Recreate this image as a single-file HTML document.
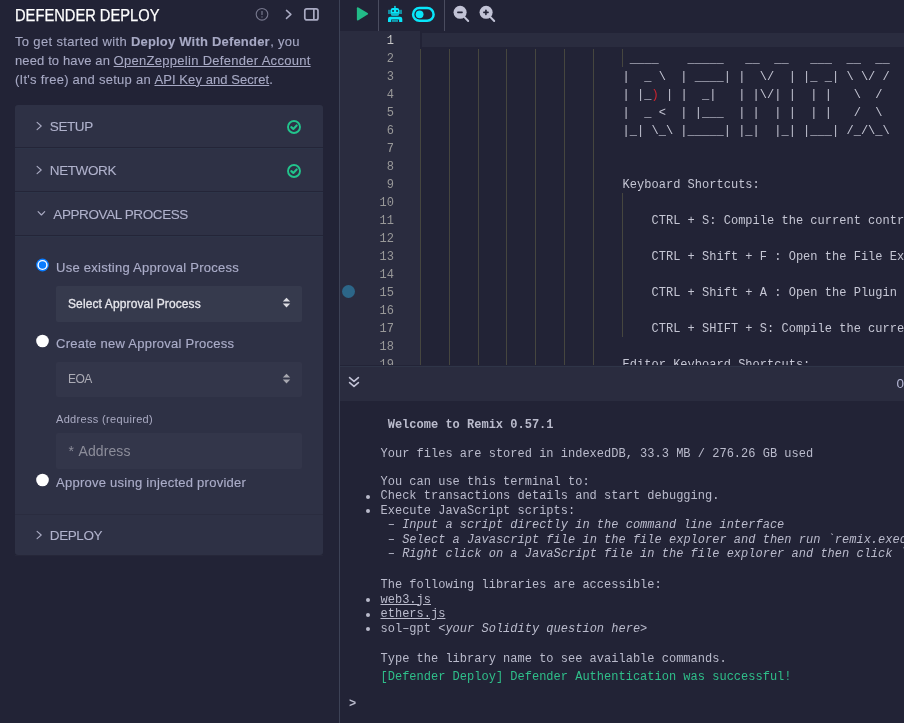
<!DOCTYPE html>
<html><head><meta charset="utf-8">
<style>
*{box-sizing:border-box;margin:0;padding:0}
html,body{width:904px;height:723px;overflow:hidden;background:#222336}
body{position:relative;font-family:"Liberation Sans",sans-serif}
.a{position:absolute;white-space:pre;line-height:1}
.s{font-family:"Liberation Sans",sans-serif}
.m{font-family:"Liberation Mono",monospace}
#left{position:absolute;left:0;top:0;width:339px;height:723px;background:#222336}
#lborder{position:absolute;left:339px;top:0;width:1px;height:723px;background:#3d4256}
.card{position:absolute;left:15px;width:308px;background:#2e3145}
.hdr{color:#b0b2cc;font-size:13.5px;letter-spacing:-0.4px;-webkit-text-stroke:0.1px #b0b2cc}
.desc{color:#a7a9c4;font-size:13px;letter-spacing:0.24px;-webkit-text-stroke:0.1px #a7a9c4}
.desc u{text-decoration:underline;text-underline-offset:1px}
.lbl{color:#abadc9;font-size:13px;letter-spacing:0.26px;-webkit-text-stroke:0.15px #abadc9}
.sel{position:absolute;left:56px;width:246px;background:#363a4d;border-radius:2px}
#editor{position:absolute;left:340px;top:0;width:564px;height:365px;background:#222336;overflow:hidden}
.ln{position:absolute;left:0;width:54px;text-align:right;font-size:12px;color:#9a9aa2;font-family:"Liberation Mono",monospace;line-height:1}
.code{position:absolute;font-family:"Liberation Mono",monospace;font-size:12px;color:#c5c6d4;white-space:pre;line-height:1;letter-spacing:0.02px}
.guide{position:absolute;width:1px;background:#46463f}
#term{position:absolute;left:340px;top:365px;width:564px;height:358px;background:#222336;overflow:hidden}
.t{position:absolute;font-family:"Liberation Mono",monospace;font-size:12px;color:#babbcc;white-space:pre;line-height:1;letter-spacing:0.01px}
.t i{font-style:italic}
.bul{position:absolute;width:4px;height:4px;border-radius:50%;background:#babbcc}
</style></head>
<body><div id="root" style="position:absolute;left:0;top:0;width:904px;height:723px;overflow:hidden;will-change:transform">
<div id="left">
  <div class="a s" style="left:15px;top:8.2px;font-size:16px;color:#fff;transform:scaleX(0.918);transform-origin:0 0;-webkit-text-stroke:0.25px #fff">DEFENDER DEPLOY</div>
  <!-- header icons -->
  <svg style="position:absolute;left:254px;top:6px" width="16" height="16" viewBox="0 0 16 16">
    <circle cx="8" cy="8.3" r="5.8" fill="none" stroke="#77788e" stroke-width="1.1"/>
    <rect x="7.4" y="5" width="1.2" height="4" rx="0.5" fill="#77788e"/>
    <circle cx="8" cy="10.9" r="0.7" fill="#77788e"/>
  </svg>
  <svg style="position:absolute;left:282px;top:6px" width="14" height="16" viewBox="0 0 14 16">
    <path d="M4.5 4.4 L8.9 8.4 L4.5 12.4" fill="none" stroke="#a9aac2" stroke-width="1.5" stroke-linecap="round" stroke-linejoin="round"/>
  </svg>
  <svg style="position:absolute;left:302px;top:6px" width="18" height="16" viewBox="0 0 18 16">
    <rect x="2.8" y="2.9" width="13.2" height="11" rx="2" fill="none" stroke="#a9aac2" stroke-width="1.7"/>
    <rect x="11" y="2.9" width="1.7" height="11" fill="#a9aac2"/>
  </svg>

  <div class="a desc" style="left:15px;top:35.1px;letter-spacing:0.34px">To get started with </div>
  <div class="a desc" style="left:130.9px;top:35.1px;letter-spacing:0.2px"><b>Deploy With Defender</b></div>
  <div class="a desc" style="left:270.2px;top:35.1px;letter-spacing:0.26px">, you</div>
  <div class="a desc" style="left:15px;top:53.7px;letter-spacing:0.12px">need to have an </div>
  <div class="a desc" style="left:113.6px;top:53.7px;letter-spacing:0.29px"><u>OpenZeppelin Defender Account</u></div>
  <div class="a desc" style="left:15px;top:72.7px;letter-spacing:0.26px">(It's free) and setup an </div>
  <div class="a desc" style="left:154.5px;top:72.7px;letter-spacing:0.07px"><u>API Key and Secret</u>.</div>

  <!-- cards -->
  <div class="card" style="top:105px;height:450px;border-radius:3px"></div>
  <div style="position:absolute;left:15px;top:147px;width:308px;height:1px;background:#242538"></div>
  <div style="position:absolute;left:15px;top:148px;width:308px;height:1px;background:#2d3448"></div>
  <div style="position:absolute;left:15px;top:191px;width:308px;height:1px;background:#242538"></div>
  <div style="position:absolute;left:15px;top:192px;width:308px;height:1px;background:#2d3448"></div>
  <div style="position:absolute;left:15px;top:235px;width:308px;height:1px;background:#242538"></div>
  <div style="position:absolute;left:15px;top:236px;width:308px;height:1px;background:#2d3448"></div>
  <div style="position:absolute;left:15px;top:514px;width:308px;height:1px;background:#2a2c3f"></div>
  <div style="position:absolute;left:15px;top:555px;width:308px;height:1px;background:#262739"></div>

  <!-- chevrons -->
  <svg style="position:absolute;left:33px;top:119px" width="12" height="14" viewBox="0 0 12 14"><path d="M4.1 3.4 L8.2 7 L4.1 10.6" fill="none" stroke="#a9aac2" stroke-width="1.15" stroke-linecap="round" stroke-linejoin="round"/></svg>
  <div class="a hdr" style="left:49.8px;top:119.8px">SETUP</div>
  <svg style="position:absolute;left:33px;top:163px" width="12" height="14" viewBox="0 0 12 14"><path d="M4.1 3.4 L8.2 7 L4.1 10.6" fill="none" stroke="#a9aac2" stroke-width="1.15" stroke-linecap="round" stroke-linejoin="round"/></svg>
  <div class="a hdr" style="left:49.8px;top:163.8px">NETWORK</div>
  <svg style="position:absolute;left:35px;top:207px" width="12" height="14" viewBox="0 0 12 14"><path d="M3.1 4.6 L6.4 8 L9.7 4.6" fill="none" stroke="#a9aac2" stroke-width="1.15" stroke-linecap="round" stroke-linejoin="round"/></svg>
  <div class="a hdr" style="left:53.3px;top:207.8px">APPROVAL PROCESS</div>
  <svg style="position:absolute;left:33px;top:528px" width="12" height="14" viewBox="0 0 12 14"><path d="M4.1 3.4 L8.2 7 L4.1 10.6" fill="none" stroke="#a9aac2" stroke-width="1.15" stroke-linecap="round" stroke-linejoin="round"/></svg>
  <div class="a hdr" style="left:49.8px;top:528.7px">DEPLOY</div>

  <!-- check icons -->
  <svg style="position:absolute;left:286px;top:118.9px" width="16" height="16" viewBox="0 0 16 16">
    <circle cx="8" cy="8" r="6" fill="none" stroke="#22c48c" stroke-width="1.9"/>
    <path d="M5.3 8.1 L7.3 9.9 L10.7 6.4" fill="none" stroke="#22c48c" stroke-width="2.1" stroke-linecap="round" stroke-linejoin="round"/>
  </svg>
  <svg style="position:absolute;left:286px;top:162.8px" width="16" height="16" viewBox="0 0 16 16">
    <circle cx="8" cy="8" r="6" fill="none" stroke="#22c48c" stroke-width="1.9"/>
    <path d="M5.3 8.1 L7.3 9.9 L10.7 6.4" fill="none" stroke="#22c48c" stroke-width="2.1" stroke-linecap="round" stroke-linejoin="round"/>
  </svg>

  <!-- radios -->
  <svg style="position:absolute;left:35px;top:257.5px" width="15" height="15" viewBox="0 0 15 15">
    <circle cx="7.5" cy="7" r="6.4" fill="#0a7cff"/>
    <circle cx="7.5" cy="7" r="5.1" fill="#fff"/>
    <circle cx="7.5" cy="7" r="3.7" fill="#0a7cff"/>
  </svg>
  <div class="a lbl" style="left:56px;top:260.8px">Use existing Approval Process</div>
  <div class="sel" style="top:286px;height:36px"></div>
  <div class="a s" style="left:68px;top:297.8px;font-size:12px;color:#e6e6ec;letter-spacing:0.12px;-webkit-text-stroke:0.3px #e6e6ec">Select Approval Process</div>
  <svg style="position:absolute;left:282px;top:297px" width="9" height="11" viewBox="0 0 9 11">
    <path d="M4.5 0.7 L8.2 4.6 L0.8 4.6 Z" fill="#dcdce2"/>
    <path d="M4.5 10.6 L8.2 6.4 L0.8 6.4 Z" fill="#dcdce2"/>
  </svg>

  <svg style="position:absolute;left:35px;top:333.5px" width="15" height="15" viewBox="0 0 15 15">
    <circle cx="7.5" cy="7" r="6.3" fill="#fff"/>
  </svg>
  <div class="a lbl" style="left:56px;top:336.8px">Create new Approval Process</div>
  <div class="sel" style="top:362px;height:35px;background:#33364a"></div>
  <div class="a s" style="left:68px;top:373px;font-size:12px;color:#ababb5;letter-spacing:-0.6px">EOA</div>
  <svg style="position:absolute;left:282px;top:373px" width="9" height="11" viewBox="0 0 9 11">
    <path d="M4.5 0.7 L8.2 4.6 L0.8 4.6 Z" fill="#a8a8b0"/>
    <path d="M4.5 10.6 L8.2 6.4 L0.8 6.4 Z" fill="#a8a8b0"/>
  </svg>
  <div class="a s" style="left:56px;top:413.6px;font-size:11px;color:#a9aac2;letter-spacing:0.33px">Address (required)</div>
  <div class="sel" style="top:433px;height:36px;background:#33364a"></div>
  <div class="a s" style="left:68.5px;top:443.8px;font-size:14px;color:#8c8d9a">*</div><div class="a s" style="left:78.5px;top:443.8px;font-size:14px;color:#8c8d9a;letter-spacing:0.1px">Address</div>

  <svg style="position:absolute;left:35px;top:472.5px" width="15" height="15" viewBox="0 0 15 15">
    <circle cx="7.5" cy="7" r="6.3" fill="#fff"/>
  </svg>
  <div class="a lbl" style="left:56px;top:475.8px">Approve using injected provider</div>
</div>
<div id="lborder"></div>

<div id="editor"><div style="position:absolute;left:0;top:0;width:564px;height:31px;background:#222336"></div>
<div style="position:absolute;left:38px;top:0;width:1px;height:31px;background:#4a4c5f"></div>
<div style="position:absolute;left:104px;top:0;width:1px;height:31px;background:#4a4c5f"></div>
<svg style="position:absolute;left:14.2px;top:5px" width="16" height="18" viewBox="0 0 16 18">
<path d="M2.9 3.3 Q2.9 1.6 4.4 2.4 L13.6 8.1 Q14.8 8.85 13.6 9.6 L4.4 15.3 Q2.9 16.1 2.9 14.4 Z" fill="#22bb88"/></svg>
<svg style="position:absolute;left:47px;top:5px" width="16" height="18" viewBox="0 0 16 18">
<g fill="#08e6fa">
<rect x="7.0" y="0.9" width="1.9" height="2.2" opacity="0.75"/>
<rect x="3.8" y="2.9" width="8.3" height="7.9" rx="1.9"/>
<rect x="1.0" y="4.8" width="2.9" height="4.2" opacity="0.55"/>
<rect x="12.0" y="4.8" width="3.0" height="4.2" opacity="0.55"/>
<path d="M1 17 L1 14 Q1 11.8 3.2 11.8 L13.1 11.8 Q15.3 11.8 15.3 14 L15.3 17 L12.1 17 L12.1 14.4 L4.2 14.4 L4.2 17 Z"/>
<rect x="5.0" y="15.0" width="6.0" height="1.9" opacity="0.6"/>
</g>
<rect x="5.2" y="5.15" width="1.7" height="1.65" fill="#222336"/>
<rect x="9.2" y="5.15" width="1.7" height="1.65" fill="#222336"/>
<rect x="3.8" y="8.0" width="8.3" height="2.2" fill="#222336" opacity="0.2"/>
</svg>
<svg style="position:absolute;left:71px;top:5px" width="25" height="18" viewBox="0 0 25 18">
<rect x="2.1" y="3.1" width="20.5" height="12.7" rx="6.35" fill="none" stroke="#08e6fa" stroke-width="2.5"/>
<circle cx="8.6" cy="9.35" r="3.9" fill="#08e6fa"/></svg>
<svg style="position:absolute;left:112px;top:4px" width="18" height="20" viewBox="0 0 18 20">
<circle cx="8.1" cy="8.3" r="6.55" fill="#c2c3d6"/>
<path d="M12 12.6 L16.2 17" stroke="#c2c3d6" stroke-width="2" stroke-linecap="round"/>
<rect x="5.1" y="7.6" width="5.7" height="1.55" rx="0.7" fill="#222336"/></svg>
<svg style="position:absolute;left:138px;top:4px" width="18" height="20" viewBox="0 0 18 20">
<circle cx="8.1" cy="8.3" r="6.55" fill="#c2c3d6"/>
<path d="M12 12.6 L16.2 17" stroke="#c2c3d6" stroke-width="2" stroke-linecap="round"/>
<rect x="5.1" y="7.6" width="5.7" height="1.55" rx="0.7" fill="#222336"/><rect x="7.15" y="5.5" width="1.55" height="5.7" rx="0.7" fill="#222336"/></svg>
<div style="position:absolute;left:0;top:31px;width:80px;height:334px;background:#2a2c3f"></div>
<div style="position:absolute;left:81.6px;top:33px;width:500px;height:14px;background:#2a2c3f"></div>
<div style="position:absolute;left:2.1px;top:284.8px;width:13px;height:13px;border-radius:50%;background:#2c6688"></div>
<div class="ln" style="top:34.6px;color:#c6c6c6">1</div>
<div class="ln" style="top:52.6px;color:#989898">2</div>
<div class="ln" style="top:70.6px;color:#989898">3</div>
<div class="ln" style="top:88.6px;color:#989898">4</div>
<div class="ln" style="top:106.6px;color:#989898">5</div>
<div class="ln" style="top:124.6px;color:#989898">6</div>
<div class="ln" style="top:142.6px;color:#989898">7</div>
<div class="ln" style="top:160.6px;color:#989898">8</div>
<div class="ln" style="top:178.6px;color:#989898">9</div>
<div class="ln" style="top:196.6px;color:#989898">10</div>
<div class="ln" style="top:214.6px;color:#989898">11</div>
<div class="ln" style="top:232.6px;color:#989898">12</div>
<div class="ln" style="top:250.6px;color:#989898">13</div>
<div class="ln" style="top:268.6px;color:#989898">14</div>
<div class="ln" style="top:286.6px;color:#989898">15</div>
<div class="ln" style="top:304.6px;color:#989898">16</div>
<div class="ln" style="top:322.6px;color:#989898">17</div>
<div class="ln" style="top:340.6px;color:#989898">18</div>
<div class="ln" style="top:358.6px;color:#989898">19</div>
<div class="guide" style="left:80.0px;top:49px;height:316px"></div>
<div class="guide" style="left:108.8px;top:49px;height:316px"></div>
<div class="guide" style="left:137.6px;top:49px;height:316px"></div>
<div class="guide" style="left:166.4px;top:49px;height:316px"></div>
<div class="guide" style="left:195.2px;top:49px;height:316px"></div>
<div class="guide" style="left:224.0px;top:49px;height:316px"></div>
<div class="guide" style="left:252.8px;top:49px;height:316px"></div>
<div class="guide" style="left:281.6px;top:49px;height:18px"></div>
<div class="guide" style="left:281.6px;top:193px;height:144px"></div>
<div class="code" style="left:282.6px;top:52.6px"> ____    _____   __  __   ___  __  __</div>
<div class="code" style="left:282.6px;top:70.6px">|  _ \  | ____| |  \/  | |_ _| \ \/ /</div>
<div class="code" style="left:282.6px;top:88.6px">| |_<span style="color:#d0242e">)</span> | |  _|   | |\/| |  | |   \  /</div>
<div class="code" style="left:282.6px;top:106.6px">|  _ &lt;  | |___  | |  | |  | |   /  \</div>
<div class="code" style="left:282.6px;top:124.6px">|_| \_\ |_____| |_|  |_| |___| /_/\_\</div>
<div class="code" style="left:282.6px;top:178.6px">Keyboard Shortcuts:</div>
<div class="code" style="left:282.6px;top:214.6px">    CTRL + S: Compile the current contract</div>
<div class="code" style="left:282.6px;top:250.6px">    CTRL + Shift + F : Open the File Explorer</div>
<div class="code" style="left:282.6px;top:286.6px">    CTRL + Shift + A : Open the Plugin Manager</div>
<div class="code" style="left:282.6px;top:322.6px">    CTRL + SHIFT + S: Compile the current contract &amp; Run an entry point script</div>
<div class="code" style="left:282.6px;top:358.6px">Editor Keyboard Shortcuts:</div></div>
<div id="term"><div style="position:absolute;left:0;top:0;width:564px;height:36px;background:#2a2c3f"></div>
<div style="position:absolute;left:0;top:0;width:564px;height:1px;background:#232437"></div>
<div style="position:absolute;left:0;top:1px;width:564px;height:1px;background:#2f3548"></div>
<svg style="position:absolute;left:7px;top:10px" width="14" height="16" viewBox="0 0 14 16">
<path d="M2.6 2.6 L7 6.4 L11.4 2.6 M2.6 7.6 L7 11.4 L11.4 7.6" fill="none" stroke="#c2c3d6" stroke-width="1.6" stroke-linecap="round" stroke-linejoin="round"/></svg>
<div class="a s" style="left:556.6px;top:11.8px;font-size:13.5px;color:#b4b6d4">0</div>
<div class="t" style="left:47.7px;top:53.6px;"><b>Welcome to Remix 0.57.1</b></div>
<div class="t" style="left:40.5px;top:82.6px;">Your files are stored in indexedDB, 33.3 MB / 276.26 GB used</div>
<div class="t" style="left:40.5px;top:110.7px;">You can use this terminal to:</div>
<div class="t" style="left:40.5px;top:125.2px;">Check transactions details and start debugging.</div>
<div class="bul" style="left:26px;top:129.8px"></div>
<div class="t" style="left:40.5px;top:139.7px;">Execute JavaScript scripts:</div>
<div class="bul" style="left:26px;top:144.3px"></div>
<div class="t" style="left:40.5px;top:154.2px;"> – <i>Input a script directly in the command line interface</i></div>
<div class="t" style="left:40.5px;top:168.7px;"> – <i>Select a Javascript file in the file explorer and then run `remix.execute()` or `remix.exeCurrent()`  in the command line interface</i></div>
<div class="t" style="left:40.5px;top:183.2px;"> – <i>Right click on a JavaScript file in the file explorer and then click `Run`</i></div>
<div class="t" style="left:40.5px;top:214.0px;">The following libraries are accessible:</div>
<div class="t" style="left:40.5px;top:228.5px;"><u>web3.js</u></div>
<div class="bul" style="left:26px;top:233.1px"></div>
<div class="t" style="left:40.5px;top:243.0px;"><u>ethers.js</u></div>
<div class="bul" style="left:26px;top:247.6px"></div>
<div class="t" style="left:40.5px;top:257.5px;">sol–gpt &lt;<i>your Solidity question here</i>&gt;</div>
<div class="bul" style="left:26px;top:262.1px"></div>
<div class="t" style="left:40.5px;top:287.9px;">Type the library name to see available commands.</div>
<div class="t" style="left:40.5px;top:305.7px;color:#2fbf8a">[Defender Deploy] Defender Authentication was successful!</div>
<div class="t" style="left:9.0px;top:332.8px;"><b>&gt;</b></div></div>
</div></body></html>
